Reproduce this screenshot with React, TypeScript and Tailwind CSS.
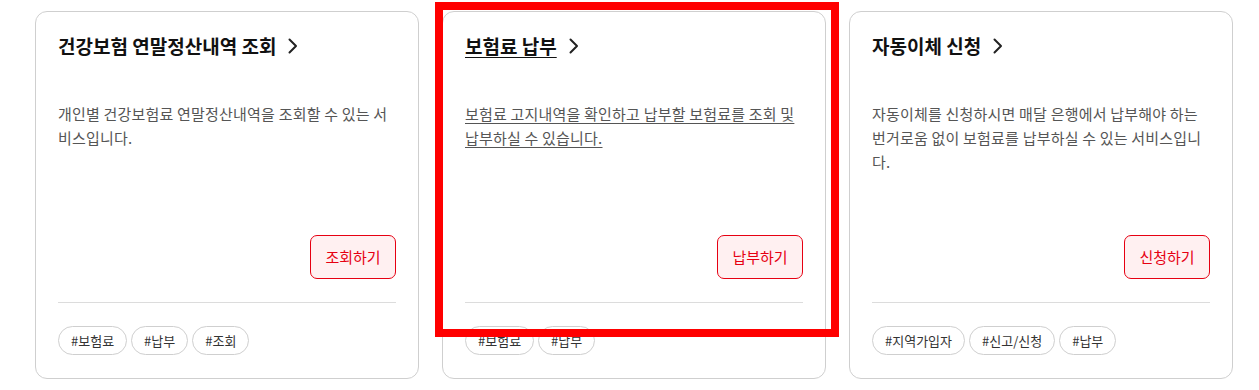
import React from 'react';

type Service = {
  title: string;
  desc: string;
  action: string;
  tags: string[];
  active?: boolean;
};

const services: Service[] = [
  {
    title: '건강보험 연말정산내역 조회',
    desc: '개인별 건강보험료 연말정산내역을 조회할 수 있는 서비스입니다.',
    action: '조회하기',
    tags: ['#보험료', '#납부', '#조회'],
  },
  {
    title: '보험료 납부',
    desc: '보험료 고지내역을 확인하고 납부할 보험료를 조회 및 납부하실 수 있습니다.',
    action: '납부하기',
    tags: ['#보험료', '#납부'],
    active: true,
  },
  {
    title: '자동이체 신청',
    desc: '자동이체를 신청하시면 매달 은행에서 납부해야 하는 번거로움 없이 보험료를 납부하실 수 있는 서비스입니다.',
    action: '신청하기',
    tags: ['#지역가입자', '#신고/신청', '#납부'],
  },
];

const Chevron = () => (
  <svg width="10" height="16" viewBox="0 0 10 16" fill="none" className="shrink-0">
    <path d="M1.5 1.5L8 8l-6.5 6.5" stroke="#222" strokeWidth="2" strokeLinecap="round" strokeLinejoin="round" />
  </svg>
);

const ServiceCard: React.FC<{ service: Service }> = ({ service }) => (
  <div className="relative w-[384px] h-[368px] shrink-0">
    <div className="flex flex-col h-full bg-white border border-[#cfcfcf] rounded-[12px] px-[22px] pt-[23px] pb-[23px]">
      <div className="flex items-center h-[22px] gap-[12px]">
        <span className={`text-[19px] font-bold text-[#111] leading-[22px] ${service.active ? 'underline underline-offset-[3px]' : ''}`}>
          {service.title}
        </span>
        <Chevron />
      </div>
      <p className={`mt-[45px] text-[15px] tracking-[0.2px] leading-[24px] text-[#555] ${service.active ? 'underline underline-offset-[3px] text-[#444]' : ''}`}>
        {service.desc}
      </p>
      <div className="mt-auto flex justify-end">
        <button className="h-[44px] w-[86px] flex items-center justify-center rounded-[7px] border border-[#e60012] bg-[#fff0f1] text-[15px] text-[#e60012]">
          {service.action}
        </button>
      </div>
      <div className="mt-[23px] border-t border-[#dcdcdc]" />
      <div className="mt-[23px] flex gap-[4px]">
        {service.tags.map(tag => (
          <span key={tag} className="h-[29px] px-[12px] flex items-center rounded-full border border-[#cfcfcf] text-[13px] text-[#333]">
            {tag}
          </span>
        ))}
      </div>
    </div>
    {service.active && (
      <div className="absolute left-[-7px] top-[-9px] w-[404px] h-[335px] border-[8px] border-[#ff0000] pointer-events-none" />
    )}
  </div>
);

export default function App() {
  return (
    <div
      className="w-[1259px] h-[390px] bg-white overflow-hidden"
      style={{ fontFamily: '"Noto Sans CJK KR", "Noto Sans", sans-serif' }}
    >
      <div className="flex gap-[23px] pl-[35px] pt-[11px]">
        {services.map(s => (
          <ServiceCard key={s.title} service={s} />
        ))}
      </div>
    </div>
  );
}
